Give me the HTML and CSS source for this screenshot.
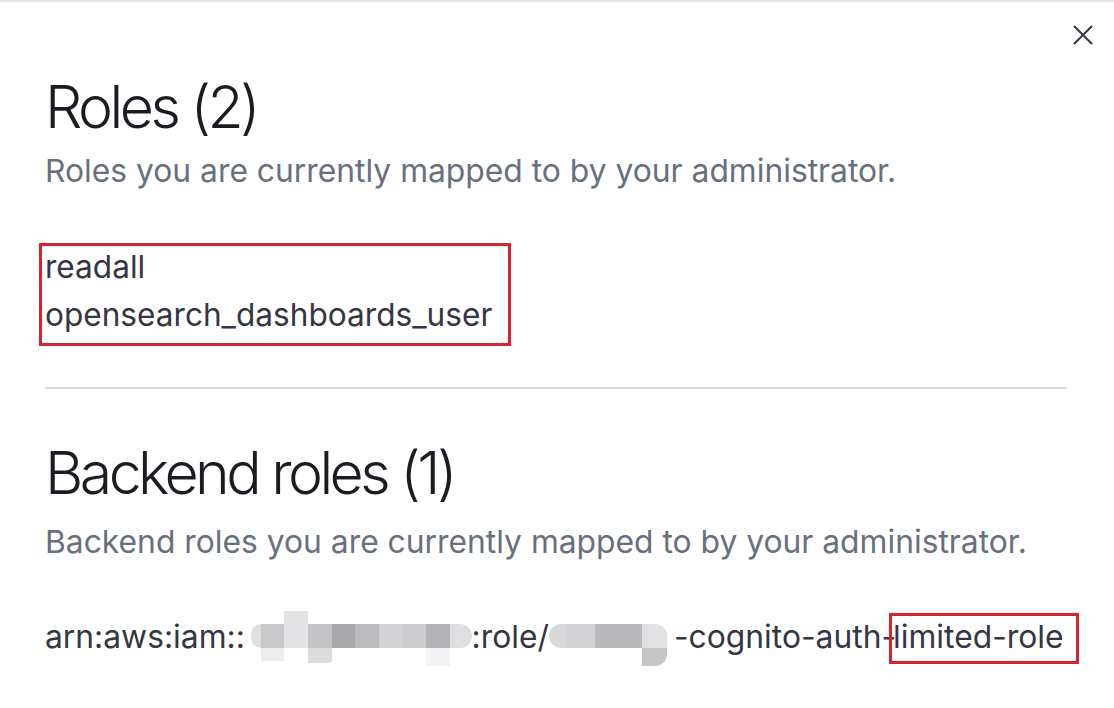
FILE: index.html
```html
<!DOCTYPE html>
<html lang="en">
<head>
<meta charset="utf-8">
<title>Roles</title>
<link rel="stylesheet" href="styles.css">
</head>
<body>
<div class="modal">
  <button class="close" aria-label="Close">
    <svg width="20" height="20" viewBox="0 0 20 20"><path d="M1 1 L19 19 M19 1 L1 19" stroke="#343741" stroke-width="2" fill="none"/></svg>
  </button>
  <section class="section">
    <h2 class="title">Roles (2)</h2>
    <p class="desc">Roles you are currently mapped to by your administrator.</p>
    <div class="hl-box roles">
      <div class="role">readall</div>
      <div class="role role-2">opensearch_dashboards_user</div>
    </div>
  </section>
  <hr class="divider">
  <section class="section">
    <h2 class="title title-2">Backend roles (1)</h2>
    <p class="desc desc-2">Backend roles you are currently mapped to by your administrator.</p>
    <div class="arn">arn:aws:iam::<span class="blur blur-a"><span class="b cap-l c-e0"></span><span class="b c-c9"><span class="ext below c-ec"></span></span><span class="b c-e3"><span class="ext above c-e3"></span></span><span class="b c-c4"><span class="ext below2 c-dc"></span></span><span class="b c-a9"></span><span class="b c-bc"></span><span class="b c-d3"></span><span class="b c-cd"></span><span class="b c-b3"><span class="ext below3 c-f3"></span></span><span class="b cap-r c-df"></span></span>:role/<span class="blur blur-b"><span class="b w18 cap-l2 c-d8"></span><span class="b w28 c-d3"></span><span class="b w47 c-b9"></span><span class="b w25 cap-r2 c-e1"><span class="ext below4 c-c6"></span></span></span>-cognito-auth-<span class="hl-box hl-inline">limited-role</span></div>
  </section>
</div>
</body>
</html>
```
FILE: styles.css
```css
html, body {
  margin: 0;
  padding: 0;
  background: #ffffff;
}
body {
  font-family: Inter, "Noto Sans", sans-serif;
  width: 1114px;
  height: 708px;
  overflow: hidden;
}
.modal {
  position: relative;
  border-top: 2px solid #e4e6eb;
  padding: 69px 47px 0 45px;
  height: 706px;
  box-sizing: border-box;
}
.close {
  position: absolute;
  top: 23px;
  right: 21px;
  width: 20px;
  height: 20px;
  padding: 0;
  border: 0;
  background: none;
  display: flex;
}
.title {
  margin: 0;
  font-size: 59px;
  line-height: 72px;
  font-weight: 350;
  color: #1a1c21;
  letter-spacing: -0.06em;
}
.desc {
  margin: 5px 0 0;
  font-size: 31.8px;
  line-height: 46px;
  color: #69707d;
}
.desc-2 { margin-top: 10px; }
.hl-box {
  border: 3px solid #d8232f;
}
.roles {
  display: inline-block;
  margin: 49px 0 0 -6px;
  padding: 0 16px 7px 3px;
}
.role {
  font-size: 31.6px;
  line-height: 42px;
  color: #343741;
}
.role-2 { margin-top: 6px; }
.divider {
  margin: 41px 0 0;
  border: 0;
  height: 2px;
  background: #d3dae6;
}
.title-2 { margin-top: 48px; }
.arn {
  margin-top: 51px;
  font-size: 31.8px;
  line-height: 42px;
  color: #343741;
  white-space: nowrap;
}
.hl-inline {
  display: inline-block;
  margin: -3px 0 0 -7px;
  padding: 0 12px 3px 1px;
  line-height: 42px;
}
.blur {
  display: inline-flex;
  vertical-align: baseline;
  height: 24px;
}
.blur-a { margin-left: 6px; }
.blur-b { margin-left: 0; margin-right: 7px; }
.b {
  position: relative;
  display: block;
  width: 23.6px;
  height: 24px;
}
.w18 { width: 18px; }
.w28 { width: 28px; }
.w47 { width: 47px; }
.w25 { width: 25px; }
.cap-l { width: 10px; border-radius: 12px 0 0 12px; }
.cap-r { width: 22px; border-radius: 0 12px 12px 0; }
.cap-l2 { border-radius: 12px 0 0 12px; }
.cap-r2 { border-radius: 0 12px 0 0; }
.ext {
  position: absolute;
  left: 0;
  width: 100%;
}
.above { bottom: 100%; height: 13px; }
.below { top: 100%; height: 13px; }
.below2 { top: 100%; height: 15px; border-radius: 0 0 4px 0; }
.below3 { top: 100%; height: 18px; }
.below4 { top: 100%; height: 18px; border-radius: 0 0 12px 0; }
.c-e0 { background: #e0e0e2; }
.c-c9 { background: #c9c9cc; }
.c-ec { background: #ececee; }
.c-e3 { background: #e3e3e5; }
.c-c4 { background: #c4c4c7; }
.c-dc { background: #dcdcde; }
.c-a9 { background: #a9a9ac; }
.c-bc { background: #bcbcbf; }
.c-d3 { background: #d3d3d5; }
.c-cd { background: #cdcdd0; }
.c-b3 { background: #b3b3b6; }
.c-f3 { background: #f3f3f5; }
.c-df { background: #dfdfe1; }
.c-d8 { background: #d8d8da; }
.c-b9 { background: #b9b9bc; }
.c-e1 { background: #e1e1e3; }
.c-c6 { background: #c6c6c8; }
```
